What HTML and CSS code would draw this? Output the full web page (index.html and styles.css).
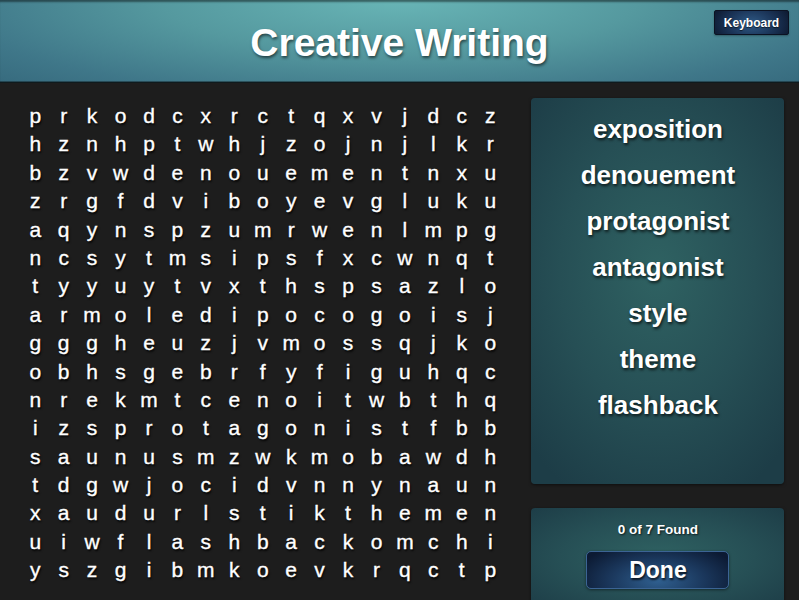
FILE: index.html
```html
<!DOCTYPE html>
<html>
<head>
<meta charset="utf-8">
<link rel="stylesheet" href="styles.css">
</head>
<body>
<header class="header">
  <h1 class="title">Creative Writing</h1>
  <button class="kbd-btn">Keyboard</button>
</header>
<main class="main">
  <div class="grid">
    <span>p</span><span>r</span><span>k</span><span>o</span><span>d</span><span>c</span><span>x</span><span>r</span><span>c</span><span>t</span><span>q</span><span>x</span><span>v</span><span>j</span><span>d</span><span>c</span><span>z</span>
    <span>h</span><span>z</span><span>n</span><span>h</span><span>p</span><span>t</span><span>w</span><span>h</span><span>j</span><span>z</span><span>o</span><span>j</span><span>n</span><span>j</span><span>l</span><span>k</span><span>r</span>
    <span>b</span><span>z</span><span>v</span><span>w</span><span>d</span><span>e</span><span>n</span><span>o</span><span>u</span><span>e</span><span>m</span><span>e</span><span>n</span><span>t</span><span>n</span><span>x</span><span>u</span>
    <span>z</span><span>r</span><span>g</span><span>f</span><span>d</span><span>v</span><span>i</span><span>b</span><span>o</span><span>y</span><span>e</span><span>v</span><span>g</span><span>l</span><span>u</span><span>k</span><span>u</span>
    <span>a</span><span>q</span><span>y</span><span>n</span><span>s</span><span>p</span><span>z</span><span>u</span><span>m</span><span>r</span><span>w</span><span>e</span><span>n</span><span>l</span><span>m</span><span>p</span><span>g</span>
    <span>n</span><span>c</span><span>s</span><span>y</span><span>t</span><span>m</span><span>s</span><span>i</span><span>p</span><span>s</span><span>f</span><span>x</span><span>c</span><span>w</span><span>n</span><span>q</span><span>t</span>
    <span>t</span><span>y</span><span>y</span><span>u</span><span>y</span><span>t</span><span>v</span><span>x</span><span>t</span><span>h</span><span>s</span><span>p</span><span>s</span><span>a</span><span>z</span><span>l</span><span>o</span>
    <span>a</span><span>r</span><span>m</span><span>o</span><span>l</span><span>e</span><span>d</span><span>i</span><span>p</span><span>o</span><span>c</span><span>o</span><span>g</span><span>o</span><span>i</span><span>s</span><span>j</span>
    <span>g</span><span>g</span><span>g</span><span>h</span><span>e</span><span>u</span><span>z</span><span>j</span><span>v</span><span>m</span><span>o</span><span>s</span><span>s</span><span>q</span><span>j</span><span>k</span><span>o</span>
    <span>o</span><span>b</span><span>h</span><span>s</span><span>g</span><span>e</span><span>b</span><span>r</span><span>f</span><span>y</span><span>f</span><span>i</span><span>g</span><span>u</span><span>h</span><span>q</span><span>c</span>
    <span>n</span><span>r</span><span>e</span><span>k</span><span>m</span><span>t</span><span>c</span><span>e</span><span>n</span><span>o</span><span>i</span><span>t</span><span>w</span><span>b</span><span>t</span><span>h</span><span>q</span>
    <span>i</span><span>z</span><span>s</span><span>p</span><span>r</span><span>o</span><span>t</span><span>a</span><span>g</span><span>o</span><span>n</span><span>i</span><span>s</span><span>t</span><span>f</span><span>b</span><span>b</span>
    <span>s</span><span>a</span><span>u</span><span>n</span><span>u</span><span>s</span><span>m</span><span>z</span><span>w</span><span>k</span><span>m</span><span>o</span><span>b</span><span>a</span><span>w</span><span>d</span><span>h</span>
    <span>t</span><span>d</span><span>g</span><span>w</span><span>j</span><span>o</span><span>c</span><span>i</span><span>d</span><span>v</span><span>n</span><span>n</span><span>y</span><span>n</span><span>a</span><span>u</span><span>n</span>
    <span>x</span><span>a</span><span>u</span><span>d</span><span>u</span><span>r</span><span>l</span><span>s</span><span>t</span><span>i</span><span>k</span><span>t</span><span>h</span><span>e</span><span>m</span><span>e</span><span>n</span>
    <span>u</span><span>i</span><span>w</span><span>f</span><span>l</span><span>a</span><span>s</span><span>h</span><span>b</span><span>a</span><span>c</span><span>k</span><span>o</span><span>m</span><span>c</span><span>h</span><span>i</span>
    <span>y</span><span>s</span><span>z</span><span>g</span><span>i</span><span>b</span><span>m</span><span>k</span><span>o</span><span>e</span><span>v</span><span>k</span><span>r</span><span>q</span><span>c</span><span>t</span><span>p</span>
  </div>
  <aside class="side">
    <ul class="words panel">
      <li>exposition</li>
      <li>denouement</li>
      <li>protagonist</li>
      <li>antagonist</li>
      <li>style</li>
      <li>theme</li>
      <li>flashback</li>
    </ul>
    <div class="status panel">
      <div class="found">0 of 7 Found</div>
      <button class="done-btn">Done</button>
    </div>
  </aside>
</main>
</body>
</html>
```
FILE: styles.css
```css
html, body {
  margin: 0;
  padding: 0;
}
body {
  width: 799px;
  height: 600px;
  overflow: hidden;
  background: #1d1d1d;
  font-family: "Liberation Sans", Arial, sans-serif;
  color: #fff;
}
.header {
  position: relative;
  height: 83px;
  box-sizing: border-box;
  background: radial-gradient(ellipse 75% 160% at 50% 0%, #68b5b6 0%, #55999f 40%, #3f7789 75%, #336579 100%);
  box-shadow: inset 0 3px 2px -1px rgba(0,0,0,0.45), inset 0 -1px 0 rgba(0,0,0,0.35);
  border-bottom: 1px solid #0f1a1d;
  display: flex;
  justify-content: center;
}
.title {
  margin: 0;
  padding-top: 20px;
  font-size: 39px;
  line-height: 46px;
  font-weight: bold;
  text-shadow: 1px 2px 3px rgba(0,0,0,0.55);
}
.kbd-btn {
  position: absolute;
  top: 10px;
  left: 714px;
  width: 75px;
  height: 25px;
  padding: 0;
  border: 1px solid #0b1222;
  border-radius: 2px;
  background: radial-gradient(ellipse 60% 120% at 50% 55%, #2f5a86 0%, #1a3356 55%, #0c162b 100%);
  color: #fff;
  font-family: "Liberation Sans", Arial, sans-serif;
  font-weight: bold;
  font-size: 12px;
  text-shadow: 0 1px 1px rgba(0,0,0,0.6);
  box-shadow: 0 1px 2px rgba(0,0,0,0.3);
}
.main {
  display: flex;
  align-items: flex-start;
}
.grid {
  margin: 19px 0 0 21px;
  display: grid;
  grid-template-columns: repeat(17, 28.45px);
  grid-auto-rows: 28.4px;
  font-size: 21px;
  line-height: 28.4px;
  text-align: center;
  -webkit-text-stroke: 0.35px #fff;
  text-shadow: 1px 2px 2px rgba(0,0,0,0.9);
}
.side {
  margin: 15px 0 0 27px;
  width: 253px;
  display: flex;
  flex-direction: column;
  gap: 24px;
}
.panel {
  border-radius: 4px;
  background: radial-gradient(ellipse 70% 65% at 50% 45%, #2f6262 0%, #264f55 55%, #1d3d47 100%);
  box-shadow: 0 1px 3px rgba(0,0,0,0.5);
}
.words {
  list-style: none;
  margin: 0;
  padding: 8px 0 0;
  height: 386px;
  box-sizing: border-box;
  font-size: 26px;
  font-weight: bold;
  line-height: 46px;
  text-align: center;
  text-shadow: 1px 2px 3px rgba(0,0,0,0.7);
}
.status {
  height: 110px;
  display: flex;
  flex-direction: column;
  align-items: center;
  padding-top: 14px;
  box-sizing: border-box;
}
.found {
  font-size: 13.5px;
  font-weight: bold;
  line-height: 16px;
  text-shadow: 1px 1px 2px rgba(0,0,0,0.7);
}
.done-btn {
  margin-top: 13px;
  width: 143px;
  height: 38px;
  padding: 0;
  border: 1px solid #3b6494;
  border-radius: 5px;
  background: radial-gradient(ellipse 60% 110% at 50% 80%, #2f5f8f 0%, #1b385d 55%, #0c1a33 100%);
  color: #fff;
  font-family: "Liberation Sans", Arial, sans-serif;
  font-weight: bold;
  font-size: 23px;
  text-shadow: 1px 2px 2px rgba(0,0,0,0.7);
  box-shadow: 0 1px 3px rgba(0,0,0,0.5);
}
```
